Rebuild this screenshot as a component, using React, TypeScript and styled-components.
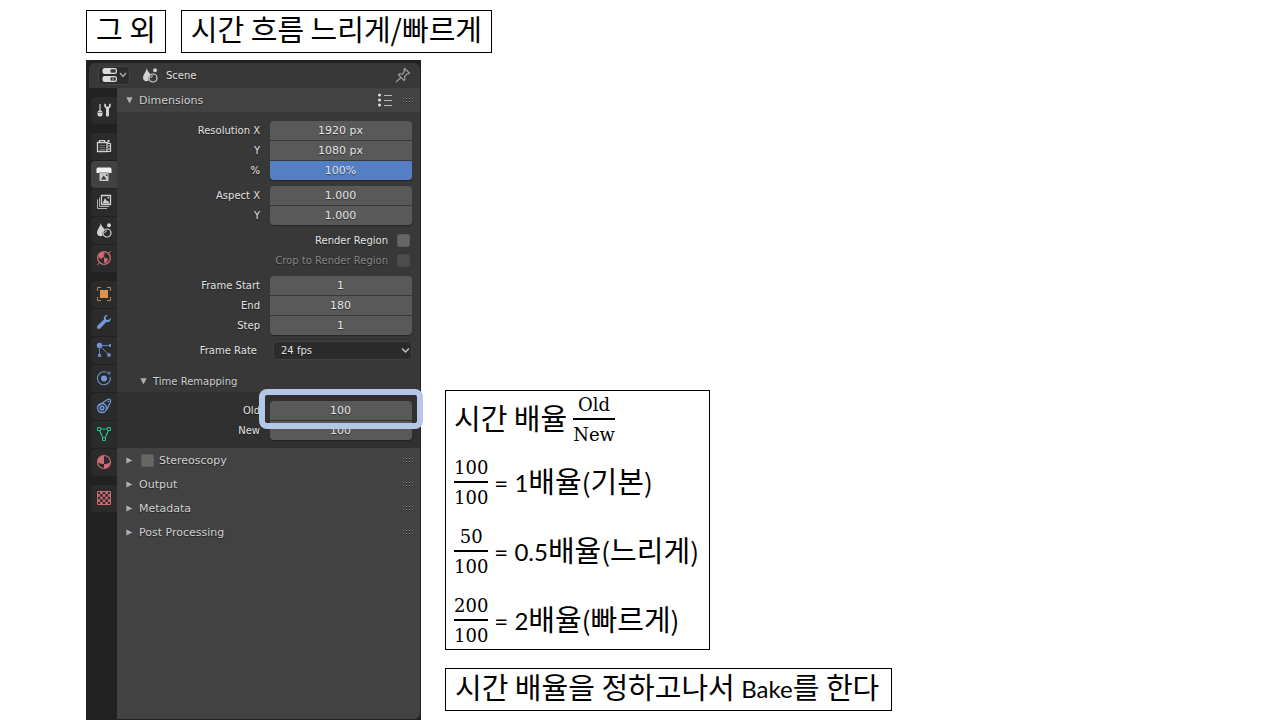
import React from "react";
import styled, { createGlobalStyle, css } from "styled-components";

const GlobalStyle = createGlobalStyle`
  *, *::before, *::after { box-sizing: border-box; }
  body { margin: 0; background: #fff; color: #000; }
`;

const uiFont = `"DejaVu Sans", sans-serif`;
const koreanFont = `"Noto Sans CJK KR", sans-serif`;

/* ---------- slide ---------- */

const Slide = styled.main`
  display: flex;
  flex-direction: column;
  gap: 7px;
  min-height: 100vh;
  padding: 10px 0 0 86px;
`;

const TitleRow = styled.header`
  display: flex;
  gap: 15px;
`;

const TextBox = styled.div<{ $note?: boolean }>`
  border: 1px solid #000;
  padding: 0 ${(p) => (p.$note ? 12 : 9)}px 6px 9px;
  font: 400 29px/35px ${koreanFont};
  white-space: nowrap;
`;

const Latin = styled.span`
  font-family: Lato, sans-serif;
  font-size: 24px;
  line-height: 1;
  vertical-align: 1px;
`;

const Paren = styled.span`
  font-size: 26px;
  line-height: 1;
`;

const Content = styled.div`
  display: flex;
  flex: 1;
  gap: 24px;
`;

const Notes = styled.section`
  display: flex;
  flex-direction: column;
  align-items: flex-start;
  justify-content: flex-end;
  gap: 18px;
  padding-bottom: 9px;
`;

const FormulaBox = styled.div`
  border: 1px solid #000;
  padding: 4px 10px 3px 8px;
`;

const Formula = styled.div`
  display: flex;
  align-items: center;
  gap: 6px;
  height: 50px;
  font: 400 29px/40px ${koreanFont};
  white-space: nowrap;
`;

const FormulaText = styled.span`
  padding-bottom: 7px;
`;

const FormulaList = styled.div`
  display: flex;
  flex-direction: column;
  gap: 19px;
  margin-top: 13px;
`;

const FractionBox = styled.span`
  display: flex;
  flex-direction: column;
  gap: 5px;
  text-align: center;
  font: 400 18px/20px "DejaVu Serif", serif;
`;

const Numerator = styled.span`
  padding-bottom: 3px;
  border-bottom: 2px solid #000;
`;

function Fraction({ top, bottom }: { top: string; bottom: string }) {
  return (
    <FractionBox>
      <Numerator>{top}</Numerator>
      <span>{bottom}</span>
    </FractionBox>
  );
}

/* ---------- properties editor ---------- */

const Editor = styled.section`
  display: flex;
  flex-direction: column;
  flex: 0 0 335px;
  padding: 3px 1px 1px 3px;
  background: #212121;
  color: #e2e2e2;
  font: 10px/12px ${uiFont};
  text-shadow: 0 1px 1px rgba(0, 0, 0, 0.5);
`;

const EditorHeader = styled.div`
  display: flex;
  align-items: center;
  height: 25px;
  padding: 0 9px 1px;
  border-radius: 6px 6px 0 0;
  background: #383838;
`;

const TypeButton = styled.button`
  display: flex;
  align-items: center;
  gap: 1px;
  width: 32px;
  height: 19px;
  margin-right: 12px;
  padding: 0 2px 0 3px;
  border: 1px solid #444;
  border-radius: 4px;
  background: #2c2c2c;
`;

const ContextName = styled.span`
  flex: 1;
  padding: 2px 0 0 8px;
`;

const IconButton = styled.button`
  display: flex;
  padding: 0;
  border: 0;
  background: none;
`;

const EditorBody = styled.div`
  display: flex;
  flex: 1;
`;

const TabBar = styled.nav`
  display: flex;
  flex-direction: column;
  gap: 9px;
  width: 28px;
  padding: 9px 0 0 2px;
`;

const TabGroup = styled.div`
  display: flex;
  flex-direction: column;
  gap: 1px;
`;

const Tab = styled.button<{ $active?: boolean }>`
  display: flex;
  align-items: center;
  justify-content: center;
  height: 27px;
  padding: 0 0 2px;
  border: 0;
  border-radius: 4px 0 0 4px;
  background: ${(p) => (p.$active ? "#424242" : "#2b2b2b")};
`;

const Panels = styled.div`
  flex: 1;
  background: #424242;
  border-radius: 0 0 6px 0;
`;

const PanelHeader = styled.div`
  display: flex;
  align-items: center;
  height: 24px;
  padding: 0 6px 0 9px;
  color: #d0d0d0;
  font-size: 11px;
  line-height: 14px;
`;

const SubHeader = styled(PanelHeader)`
  height: 22px;
  margin-top: 10px;
  padding-left: 23px;
  font-size: 10px;
`;

const PanelTitle = styled.span`
  flex: 1;
  padding: 2px 0 0 6px;
`;

const PanelCheckLabel = styled.label`
  display: flex;
  flex: 1;
  align-items: center;
  gap: 5px;
  padding: 1px 0 0 8px;
`;

const HeaderTools = styled.div`
  display: flex;
  align-items: center;
  gap: 10px;
`;

const PanelBody = styled.div`
  padding-top: 9px;
  background: #383838;
`;

const SubBody = styled.div`
  padding: 9px 0 8px;
  background: #303030;
`;

const FieldStack = styled.div`
  display: flex;
  flex-direction: column;
  gap: 1px;
  padding-right: 8px;
  margin-bottom: 6px;

  ${SubBody} & { margin-bottom: 0; }
`;

const FieldRow = styled.div`
  display: flex;
  align-items: center;
`;

const FieldLabel = styled.label<{ $gap?: number }>`
  flex: 1;
  padding-right: ${(p) => p.$gap ?? 10}px;
  text-align: right;
`;

const FieldSlot = styled.div`
  position: relative;
  display: flex;
  width: 142px;
`;

const NumberInput = styled.input<{ $first: boolean; $last: boolean; $slider?: boolean }>`
  width: 100%;
  height: 19px;
  padding: 0 1px 1px 0;
  border: 0;
  border-radius: ${(p) => (p.$first ? "4px 4px" : "0 0")} ${(p) => (p.$last ? "4px 4px" : "0 0")};
  background: ${(p) => (p.$slider ? "#557fc4" : "#595959")};
  color: #e6e6e6;
  font: 11px/18px ${uiFont};
  text-align: center;
  text-shadow: inherit;
  ${(p) => p.$last && css`box-shadow: 0 1px 1px rgba(0, 0, 0, 0.35);`}
`;

/* Frame that calls attention to one field; it lies over its neighbours. */
const Highlight = styled.span`
  position: absolute;
  inset: -12px -11px -9px;
  z-index: 1;
  border: 6px solid #b4c7e7;
  border-radius: 8px;
  pointer-events: none;
`;

const CheckRow = styled.label<{ $muted?: boolean }>`
  display: flex;
  align-items: center;
  justify-content: flex-end;
  gap: 9px;
  height: 20px;
  padding: 0 10px 1px 0;
  color: ${(p) => (p.$muted ? "#868686" : "#e6e6e6")};
`;

const CheckBox = styled.input`
  appearance: none;
  width: 13px;
  height: 13px;
  margin: 0;
  border: 1px solid #5c5c5c;
  border-radius: 2px;
  background: #666;

  &:disabled { border-color: #484848; background: #4d4d4d; }
`;

const CheckGroup = styled.div`
  margin-bottom: 5px;
`;

const SelectSlot = styled.div`
  position: relative;
  width: 139px;
`;

const Select = styled.select`
  display: block;
  appearance: none;
  width: 100%;
  height: 19px;
  padding: 1px 20px 0 7px;
  border: 1px solid #404040;
  border-radius: 4px;
  background: #2b2b2b;
  color: #e2e2e2;
  font: 10px/16px ${uiFont};
  text-shadow: inherit;
`;

const SelectArrow = styled.svg`
  position: absolute;
  top: 6px;
  right: 2px;
  pointer-events: none;
`;

/* ---------- icons ---------- */

const Glyph = styled.svg.attrs({ viewBox: "0 0 16 16", fill: "none", "aria-hidden": true })`
  flex: none;
  width: 16px;
  height: 16px;
`;

const light = "#d2d2d2";
const red = "#cd6a74";
const blue = "#7299da";

function Chevron() {
  return (
    <svg width="8" height="6" viewBox="0 0 8 6" fill="none" aria-hidden>
      <path d="M1 1l3 3.4L7 1" stroke="#aaa" strokeWidth="1.4" />
    </svg>
  );
}

function Triangle({ open }: { open?: boolean }) {
  return (
    <svg width="7" height="7" viewBox="0 0 7 7" aria-hidden>
      <path d={open ? "M.3 .3h6.400L3.500 6.500z" : "M.3 .5l6 3-6 3z"} fill="#b0b0b0" />
    </svg>
  );
}

function Grip() {
  return (
    <svg width="11" height="5" viewBox="0 0 11 5" aria-hidden>
      {[0, 3, 6, 9].map((x) => (
        <React.Fragment key={x}>
          <path d={`M${x} 0h1v1h-1zM${x} 3h1v1h-1z`} fill="#8c8c8c" />
          <path d={`M${x} 1h1v1h-1zM${x} 4h1v1h-1z`} fill="#1c1c1c" />
        </React.Fragment>
      ))}
    </svg>
  );
}

const SceneIcon = () => (
  <Glyph>
    <path d="M4.8 1C4.5 4.5 1 7.700 1 11c0 2 1.500 3.200 3.600 3.200 1 0 1.600-.2 2-.6-.6-3 .2-5 2-6.100C7 5.500 5.300 4 4.800 1z" fill={light} />
    <circle cx="13" cy="3.300" r="2" fill={light} />
    <circle cx="11" cy="11" r="4" stroke={light} strokeWidth="1.200" />
    <path d="M8.800 11a2.200 2.200 0 0 1 2.200-2.200" stroke={light} />
  </Glyph>
);

const EditorIcon = () => (
  <Glyph>
    <rect x=".5" y="1" width="14.500" height="6" rx="2.200" fill="#dcdcdc" />
    <rect x="8.500" y="2.300" width="5.300" height="3.500" rx="1" fill="#3a3a3a" />
    <rect x=".5" y="9" width="14.500" height="6" rx="2.200" fill="#dcdcdc" />
    <rect x="8.500" y="10.300" width="5.300" height="3.500" rx="1" fill="#3a3a3a" />
    <path d="M10.300 10.300h1.500v3.500h-1.500z" fill="#8a8a8a" />
  </Glyph>
);

const PinIcon = () => (
  <Glyph>
    <path d="M9.500 1.500l5 4.500-1.300 1-1.200-.2-2.500 2.900.5 2.800-1 1L3.500 8l1-1.200 2.800.3 2.400-2.900-.9-1.500zM6 10.500L1 15" stroke="#a0a0a0" strokeWidth="1.100" />
  </Glyph>
);

const ListIcon = () => (
  <Glyph>
    {[3, 8, 13].map((y) => (
      <React.Fragment key={y}>
        <circle cx="2.500" cy={y} r="1.500" fill="#e0e0e0" />
        <path d={`M7 ${y + 0.5}h8`} stroke="#b8b8b8" />
      </React.Fragment>
    ))}
  </Glyph>
);

const ToolIcon = () => (
  <Glyph>
    <path d="M4 2v7" stroke={light} strokeWidth="1.200" />
    <rect x="1.500" y="8.500" width="5" height="6" rx="2" fill={light} />
    <path d="M1.500 10.500h5" stroke="#555" strokeWidth=".7" />
    <path d="M8.500 1.500c-.8 2.500 0 4 1.500 5v7c0 1.500 3 1.500 3 0v-7c1.500-1 2.300-2.500 1.500-5L13 2v2.500h-3V2z" fill={light} />
  </Glyph>
);

const RenderIcon = () => (
  <Glyph>
    <path d="M1.500 4.500h9.500v9H1.500z" stroke={light} strokeWidth="1.300" />
    <path d="M3.500 4V2.500h5V4" stroke={light} strokeWidth="1.200" />
    <path d="M3.500 7.500h5.500M3.500 9.500h5.500M3.500 11.500h5.500" stroke="#a8a8a8" strokeWidth=".6" />
    <path d="M11.500 2h2v2.500h-2z" fill={light} />
    <path d="M11 5.500h3.500v8H11" stroke={light} strokeWidth="1.200" />
    <path d="M12 8h2M12 11h2" stroke={light} />
  </Glyph>
);

const OutputIcon = () => (
  <Glyph>
    <path d="M.5 3.500C.5 2 1.100 1.500 2.500 1.500h11c1.400 0 2 .5 2 2V7H.5z" fill="#f0f0f0" />
    <path d="M3.500 7h9v8h-9z" fill="#c8c8c8" />
    <path d="M3 6.300h10v1H3z" fill="#8c8c8c" />
    <path d="M5 13.500l2.700-4 2.800 4zM10 8.500h1.500V10H10z" fill="#3c3c3c" />
  </Glyph>
);

const LayersIcon = () => (
  <Glyph>
    <path d="M5.500 1.500h9v9h-9z" stroke={light} strokeWidth="1.300" />
    <path d="M6.500 9.500L9 4l2 3.500 1-1 1.500 3zM11.500 3h1.500v1.500h-1.500z" fill={light} />
    <path d="M3.500 3.500v9h9.500M1.500 5.500v9H11" stroke="#b0b0b0" />
  </Glyph>
);

const WorldIcon = () => (
  <Glyph>
    <circle cx="8" cy="8" r="6.300" stroke={red} strokeWidth="1.300" />
    <path d="M3 4.500c1.500-2 3-2.500 5-2L9 4 7.500 5l1 1.500L6 8l-1 1-2.500-2zM8 7.500l3.500 1L12 10l-2.500 3.500-1.500-1.500z" fill={red} />
    <path d="M11.500 4L15 1M4.500 12L1 15" stroke={red} />
  </Glyph>
);

const ObjectIcon = () => (
  <Glyph>
    <path d="M4 4h8v8H4z" fill="#dd924c" />
    <path d="M1.500 5V1.500H5M11 1.500h3.500V5M14.500 11v3.500H11M5 14.500H1.500V11" stroke="#b18258" />
  </Glyph>
);

const WrenchIcon = () => (
  <Glyph>
    <path d="M11.800 1.200c-2-.6-4 .9-4 3 0 .5.100 1 .2 1.400L1.600 11.500c-1.800 1.900.8 4.700 2.800 2.800L10.300 8c2.400.7 4.900-1 4.600-4l-2.600 2-2.200-.5-.5-2.200z" fill={blue} />
  </Glyph>
);

const ParticlesIcon = () => (
  <Glyph>
    <circle cx="3.500" cy="3.500" r="2.700" fill={blue} />
    <path d="M4 3.500h9M3.500 4v9M4 4l9 9" stroke="#5f84bb" />
    <path d="M13 2h2v3h-2zM2 12h3v3H2z" fill="#6288c3" />
    <circle cx="13" cy="13" r="1.900" fill="#6f8db9" />
  </Glyph>
);

const PhysicsIcon = () => (
  <Glyph>
    <circle cx="8" cy="8.500" r="3" fill={blue} />
    <path d="M10.500 2.300A6.500 6.500 0 1 0 14.300 7" stroke="#7190c0" strokeWidth="1.100" />
    <circle cx="13" cy="3" r="1.800" fill="#53729f" />
  </Glyph>
);

const ConstraintIcon = () => (
  <Glyph>
    <path d="M2 8L11.500 1.500c2-1 3.500.3 3 2.500L10.500 12" stroke={blue} strokeWidth="1.200" />
    <circle cx="6" cy="10" r="4.500" stroke={blue} strokeWidth="1.300" />
    <circle cx="6" cy="10" r="1.800" stroke={blue} strokeWidth="1.500" />
    <circle cx="12.500" cy="3.500" r=".8" fill={blue} />
  </Glyph>
);

const MeshIcon = () => (
  <Glyph>
    <path d="M4.500 3h7M3.500 4.500L7 12M12.500 4.500L9 12" stroke="#1fc18e" strokeWidth="1.200" />
    <path d="M1.500 1.500h3v3h-3zM11.500 1.500h3v3h-3zM6.500 11.500h3v3h-3z" stroke="#1fc18e" />
  </Glyph>
);

const MaterialIcon = () => (
  <Glyph>
    <circle cx="8" cy="8" r="6.500" stroke={red} strokeWidth="1.200" />
    <path d="M8 1.500a6.500 6.500 0 0 0-6.500 6.500C3 9.500 5.500 10 8 10zM8 10c2.500 0 5-.5 6.500-2A6.500 6.500 0 0 1 8 14.500z" fill={red} />
  </Glyph>
);

const textureCells = [0, 1, 2, 3, 4];

const TextureIcon = () => (
  <Glyph>
    <path d="M1.500 1.500h13v13h-13z" stroke={red} />
    {textureCells.map((row) =>
      textureCells.map((col) =>
        (row + col) % 2 === 1 ? (
          <rect key={`${row}-${col}`} x={1.5 + col * 2.6} y={1.5 + row * 2.6} width="2.600" height="2.600" fill={red} />
        ) : null
      )
    )}
  </Glyph>
);

/* ---------- data ---------- */

type TabItem = { name: string; icon: () => React.ReactElement; active?: boolean };

const tabGroups: TabItem[][] = [
  [{ name: "Tool", icon: ToolIcon }],
  [
    { name: "Render", icon: RenderIcon },
    { name: "Output", icon: OutputIcon, active: true },
    { name: "View Layer", icon: LayersIcon },
    { name: "Scene", icon: SceneIcon },
    { name: "World", icon: WorldIcon },
  ],
  [
    { name: "Object", icon: ObjectIcon },
    { name: "Modifiers", icon: WrenchIcon },
    { name: "Particles", icon: ParticlesIcon },
    { name: "Physics", icon: PhysicsIcon },
    { name: "Constraints", icon: ConstraintIcon },
    { name: "Object Data", icon: MeshIcon },
    { name: "Material", icon: MaterialIcon },
  ],
  [{ name: "Texture", icon: TextureIcon }],
];

type Field = { id: string; label: string; value: string; slider?: boolean; highlighted?: boolean };

const resolution: Field[] = [
  { id: "res-x", label: "Resolution X", value: "1920 px" },
  { id: "res-y", label: "Y", value: "1080 px" },
  { id: "res-percent", label: "%", value: "100%", slider: true },
];
const aspect: Field[] = [
  { id: "aspect-x", label: "Aspect X", value: "1.000" },
  { id: "aspect-y", label: "Y", value: "1.000" },
];
const frames: Field[] = [
  { id: "frame-start", label: "Frame Start", value: "1" },
  { id: "frame-end", label: "End", value: "180" },
  { id: "frame-step", label: "Step", value: "1" },
];
const remapping: Field[] = [
  { id: "map-old", label: "Old", value: "100", highlighted: true },
  { id: "map-new", label: "New", value: "100" },
];

function Fields({ items }: { items: Field[] }) {
  return (
    <FieldStack>
      {items.map((f, i) => (
        <FieldRow key={f.id}>
          <FieldLabel htmlFor={f.id}>{f.label}</FieldLabel>
          <FieldSlot>
            <NumberInput
              id={f.id}
              defaultValue={f.value}
              $first={i === 0}
              $last={i === items.length - 1}
              $slider={f.slider}
            />
            {f.highlighted && <Highlight />}
          </FieldSlot>
        </FieldRow>
      ))}
    </FieldStack>
  );
}

function PropertiesEditor() {
  return (
    <Editor>
      <EditorHeader>
        <TypeButton aria-label="Editor type">
          <EditorIcon />
          <Chevron />
        </TypeButton>
        <SceneIcon />
        <ContextName>Scene</ContextName>
        <IconButton aria-label="Pin">
          <PinIcon />
        </IconButton>
      </EditorHeader>
      <EditorBody>
        <TabBar>
          {tabGroups.map((group, i) => (
            <TabGroup key={i}>
              {group.map(({ name, icon: Icon, active }) => (
                <Tab key={name} aria-label={name} $active={active}>
                  <Icon />
                </Tab>
              ))}
            </TabGroup>
          ))}
        </TabBar>
        <Panels>
          <PanelHeader>
            <Triangle open />
            <PanelTitle>Dimensions</PanelTitle>
            <HeaderTools>
              <IconButton aria-label="Presets">
                <ListIcon />
              </IconButton>
              <Grip />
            </HeaderTools>
          </PanelHeader>
          <PanelBody>
            <Fields items={resolution} />
            <Fields items={aspect} />
            <CheckGroup>
              <CheckRow>
                Render Region
                <CheckBox type="checkbox" />
              </CheckRow>
              <CheckRow $muted>
                Crop to Render Region
                <CheckBox type="checkbox" disabled />
              </CheckRow>
            </CheckGroup>
            <Fields items={frames} />
            <FieldStack>
              <FieldRow>
                <FieldLabel htmlFor="frame-rate" $gap={16}>
                  Frame Rate
                </FieldLabel>
                <SelectSlot>
                  <Select id="frame-rate" defaultValue="24 fps">
                    <option>24 fps</option>
                  </Select>
                  <SelectArrow width="9" height="7" viewBox="0 0 9 7" fill="none" aria-hidden>
                    <path d="M1 1.500l3.500 3.500L8 1.500" stroke="#c0c0c0" strokeWidth="1.500" />
                  </SelectArrow>
                </SelectSlot>
              </FieldRow>
            </FieldStack>
            <SubHeader>
              <Triangle open />
              <PanelTitle>Time Remapping</PanelTitle>
            </SubHeader>
            <SubBody>
              <Fields items={remapping} />
            </SubBody>
          </PanelBody>
          <PanelHeader>
            <Triangle />
            <PanelCheckLabel>
              <CheckBox type="checkbox" />
              Stereoscopy
            </PanelCheckLabel>
            <Grip />
          </PanelHeader>
          {["Output", "Metadata", "Post Processing"].map((title) => (
            <PanelHeader key={title}>
              <Triangle />
              <PanelTitle>{title}</PanelTitle>
              <Grip />
            </PanelHeader>
          ))}
        </Panels>
      </EditorBody>
    </Editor>
  );
}

export default function App() {
  return (
    <>
      <GlobalStyle />
      <Slide>
        <TitleRow>
          <TextBox>그 외</TextBox>
          <TextBox>시간 흐름 느리게/빠르게</TextBox>
        </TitleRow>
        <Content>
          <PropertiesEditor />
          <Notes>
            <FormulaBox>
              <Formula>
                <FormulaText>시간 배율</FormulaText>
                <Fraction top="Old" bottom="New" />
              </Formula>
              <FormulaList>
                <Formula>
                  <Fraction top="100" bottom="100" />
                  <FormulaText>
                    <Latin>= 1</Latin>배율<Paren>(</Paren>기본<Paren>)</Paren>
                  </FormulaText>
                </Formula>
                <Formula>
                  <Fraction top="50" bottom="100" />
                  <FormulaText>
                    <Latin>= 0.5</Latin>배율<Paren>(</Paren>느리게<Paren>)</Paren>
                  </FormulaText>
                </Formula>
                <Formula>
                  <Fraction top="200" bottom="100" />
                  <FormulaText>
                    <Latin>= 2</Latin>배율<Paren>(</Paren>빠르게<Paren>)</Paren>
                  </FormulaText>
                </Formula>
              </FormulaList>
            </FormulaBox>
            <TextBox $note>
              시간 배율을 정하고나서 <Latin>Bake</Latin>를 한다
            </TextBox>
          </Notes>
        </Content>
      </Slide>
    </>
  );
}
